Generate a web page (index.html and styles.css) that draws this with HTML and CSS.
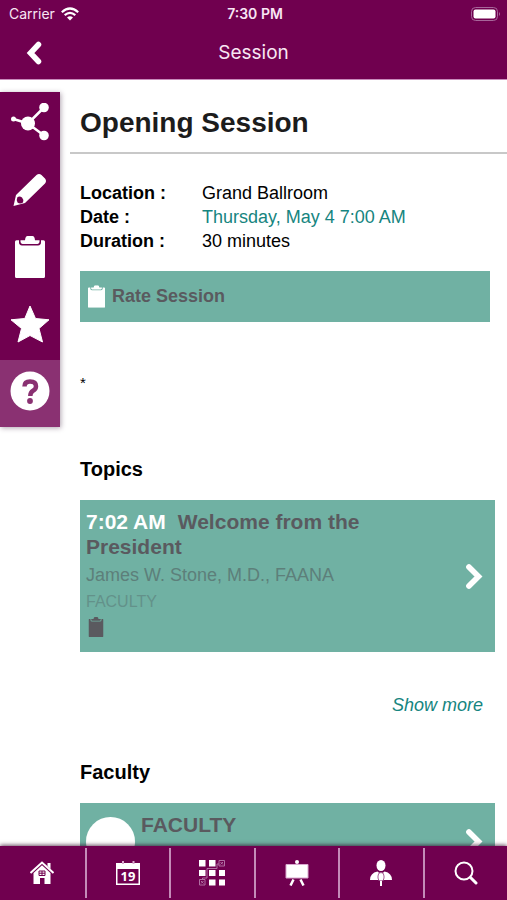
FILE: index.html
```html
<!DOCTYPE html>
<html lang="en">
<head>
<meta charset="utf-8">
<meta name="viewport" content="width=device-width, initial-scale=1">
<title>Session</title>
<link rel="stylesheet" href="styles.css">
</head>
<body>
<svg class="defs" aria-hidden="true">
  <symbol id="clipboard" viewBox="0 0 30 40">
    <path d="M1.500 4H4V6Q4 9 7 9H23Q26 9 26 6V4H28.500Q30 4 30 5.500V38.500Q30 40 28.500 40H1.500Q0 40 0 38.500V5.500Q0 4 1.500 4Z"/>
    <path d="M5.500 4H10Q10.500 0 12.500 0H17.500Q19.500 0 20 4H24.500V5.500Q24.500 7.500 22.500 7.500H7.500Q5.500 7.500 5.500 5.500Z"/>
  </symbol>
  <symbol id="chevron" viewBox="0 0 16 24">
    <path d="M3.500 3.500L12 12L3.500 20.500" fill="none" stroke="currentColor" stroke-width="5" stroke-linecap="round"/>
  </symbol>
</svg>
<div class="app">
  <header class="top">
    <div class="status">
      <div class="carrier">
        <span>Carrier</span>
        <svg width="18" height="14" viewBox="0 0 18 14">
          <path d="M0.800 5.200Q9 -2.200 17.200 5.200M3.700 8.200Q9 3.600 14.300 8.200" fill="none" stroke="currentColor" stroke-width="2.200"/>
          <path d="M6 10.500Q9 8 12 10.500L9 13.500Z"/>
        </svg>
      </div>
      <span class="clock">7:30 PM</span>
      <svg class="battery" width="30" height="14" viewBox="0 0 30 14">
        <rect x="0.500" y="0.500" width="26" height="13" rx="4" fill="none" stroke="#a7669a"/>
        <rect x="2.500" y="2.500" width="22" height="9" rx="2" fill="#fff"/>
        <path d="M28 5Q30 7 28 9Z" fill="#a7669a"/>
      </svg>
    </div>
    <div class="nav">
      <button class="back" type="button" aria-label="Back"><svg width="16" height="24" viewBox="0 0 16 24"><path d="M12.500 3.500L4.500 12L12.500 20.500" fill="none" stroke="currentColor" stroke-width="5.500" stroke-linecap="round"/></svg></button>
      <span class="nav-title">Session</span>
      <span></span>
    </div>
  </header>

  <div class="body">
    <aside class="tools">
      <button type="button" aria-label="Share"><svg width="40" height="40" viewBox="0 0 40 40"><path d="M3.500 16L18 20.500L34 4.500M18 20.500L34 32.500" fill="none" stroke="currentColor" stroke-width="2.500"/><circle cx="3.500" cy="16" r="2.500"/><circle cx="18" cy="20.500" r="7"/><circle cx="34" cy="4.500" r="4.800"/><circle cx="34" cy="32.500" r="4.800"/></svg></button>
      <button type="button" aria-label="Notes"><svg width="34" height="34" viewBox="0 0 34 34"><path fill-rule="evenodd" d="M0.500 33L3 22L23.500 2Q26 0 28.500 2L32 5.500Q34 8 32 10.500L12 30ZM4.500 24Q3 27 4.500 29.500Q7 31.500 10 29.500Q11 26.500 9 24.500Q7 23 4.500 24Z"/></svg></button>
      <button type="button" aria-label="Evaluation"><svg width="30" height="42" viewBox="0 0 30 40" preserveAspectRatio="none"><use href="#clipboard"/></svg></button>
      <button type="button" aria-label="Favorite"><svg width="40" height="38" viewBox="0 0 40 38"><path d="M20 1L25.500 13.500L39 14.800L29 23.500L32.500 37L20 30.500L8 37L11.500 23.500L1 14.800L14.800 13.500Z" stroke="currentColor" stroke-linejoin="round"/></svg></button>
      <button class="active" type="button" aria-label="Help"><svg width="40" height="40" viewBox="0 0 40 40"><circle cx="20" cy="20" r="19.500"/><path d="M14.500 15.500Q14.500 10.500 20 10.500Q26 10.500 26 15.200Q26 18 23 19.700Q20.300 21.300 20.300 25" fill="none" stroke="#8a3172" stroke-width="4.500"/><circle cx="20" cy="30" r="2.900" fill="#8a3172"/></svg></button>
    </aside>

    <main class="content">
      <h1>Opening Session</h1>
      <div class="inner">
        <dl class="facts">
          <dt>Location :</dt><dd>Grand Ballroom</dd>
          <dt>Date :</dt><dd class="teal">Thursday, May 4 7:00 AM</dd>
          <dt>Duration :</dt><dd>30 minutes</dd>
        </dl>
        <button class="rate" type="button"><svg width="17" height="23" viewBox="0 0 30 40"><use href="#clipboard"/></svg>Rate Session</button>
        <p class="note">*</p>
        <h2>Topics</h2>
        <a class="card" href="#topic">
          <div class="card-text">
            <h3><span class="time">7:02 AM</span>Welcome from the President</h3>
            <p class="person">James W. Stone, M.D., FAANA</p>
            <p class="role">FACULTY</p>
            <svg class="mark" width="20" height="20" viewBox="0 0 30 40"><use href="#clipboard"/></svg>
          </div>
          <svg class="go" width="18" height="27"><use href="#chevron"/></svg>
        </a>
        <a class="more" href="#more">Show more</a>
        <h2>Faculty</h2>
        <a class="card member" href="#faculty">
          <span class="avatar"></span>
          <div class="card-text"><h3>FACULTY</h3></div>
          <svg class="go" width="18" height="27"><use href="#chevron"/></svg>
        </a>
      </div>
    </main>
  </div>

  <nav class="tabs">
    <a href="#home" aria-label="Home"><svg width="24" height="24" viewBox="0 0 24 24"><path d="M0.500 12L12 1.500L23.500 12" fill="none" stroke="currentColor" stroke-width="2"/><path d="M17.500 2H20.500V8L17.500 5ZM3.500 12L12 4.200L20.500 12V23H14.500V17H10V23H3.500Z"/><path d="M9 10H15V14.500H9ZM12 10V14.500M9 12.200H15" fill="none" stroke="#70004f"/></svg></a>
    <a href="#agenda" aria-label="Agenda"><svg width="26" height="26" viewBox="0 0 26 26"><path fill-rule="evenodd" d="M1 3H25V25H1ZM2.500 9V23.500H23.500V9Z"/><path d="M8 1V4M18.500 1V4" stroke="#d9a9cf" stroke-width="2"/><text class="day" x="13" y="21" text-anchor="middle">19</text></svg></a>
    <a href="#floor" aria-label="Floor plan"><svg width="26" height="26" viewBox="0 0 26 26"><path d="M0 0H6.500V6.500H0ZM10 0H16.500V6.500H10ZM0 10H6.500V16H0ZM10 10H16.500V16H10ZM20 10H26V16H20ZM10 19.500H16.500V25.500H10ZM20 19.500H26V25.500H20Z"/><path d="M20 0.500H25.500V6H20ZM0.500 19.500H6V25H0.500ZM21.500 2L24 4.500M24 2L21.500 4.500M2 21L4.500 23.500M4.500 21L2 23.500M3.500 19V18H8V8.500H18V4H20" fill="none" stroke="#b06fa2" stroke-width="1"/></svg></a>
    <a href="#exhibits" aria-label="Exhibits"><svg width="24" height="26" viewBox="0 0 24 26"><circle cx="12" cy="2" r="2"/><path d="M1 4.500H23V18H1Z" stroke="#d9a9cf"/><path d="M8.500 19.500L5.500 25.500M15.500 19.500L18.500 25.500" stroke="currentColor" stroke-width="2.500"/></svg></a>
    <a href="#speakers" aria-label="Speakers"><svg width="24" height="26" viewBox="0 0 24 26"><ellipse cx="12" cy="5.500" rx="4.500" ry="5.500"/><path d="M1 20Q1 13 8.500 11.500L12 14.500L15.500 11.500Q23 13 23 20Z"/><path d="M9 16Q9 12.500 12 12.500Q15 12.500 15 16V18Q15 21 12 21Q9 21 9 18Z" stroke="#a55d94"/><path d="M12 21V26" stroke="#fff" stroke-width="2"/></svg></a>
    <a href="#search" aria-label="Search"><svg width="24" height="24" viewBox="0 0 24 24"><circle cx="10" cy="10" r="8.500" fill="none" stroke="currentColor" stroke-width="2"/><path d="M16.500 16.500L22 22" stroke="currentColor" stroke-width="3" stroke-linecap="round"/></svg></a>
  </nav>
</div>
</body>
</html>
```
FILE: styles.css
```css
* { box-sizing: border-box; }

body, h1, h2, h3, p, dl, dd { margin: 0; }

body {
  background: #fff;
  color: #000;
  font-family: "Liberation Sans", Arial, sans-serif;
  font-size: 18px;
}

.defs { position: absolute; width: 0; height: 0; }

svg { display: block; fill: currentColor; flex: none; }

button {
  border: 0;
  padding: 0;
  background: none;
  color: inherit;
  font: inherit;
  cursor: pointer;
}

a { color: inherit; text-decoration: none; }

.app {
  display: grid;
  grid-template-rows: auto minmax(0, 1fr) auto;
  height: 100vh;
}

.top {
  background: #70004f;
  border-bottom: 1px solid #c88bbb;
  color: #f8e6f4;
  font-family: Inter, sans-serif;
}

.status, .nav {
  display: grid;
  grid-template-columns: 1fr auto 1fr;
  align-items: center;
}

.status {
  height: 27px;
  padding: 0 6px 0 9px;
  font-size: 14px;
}

.carrier { display: flex; align-items: center; gap: 6px; }
.carrier svg { color: #fff; }
.clock { font-weight: 600; }
.battery { justify-self: end; }

.nav { height: 52px; padding-bottom: 1px; }
.back { justify-self: start; padding: 8px 26px; color: #fff; }
.nav-title { font-size: 19px; }

.body {
  display: grid;
  grid-template-columns: 60px minmax(0, 1fr);
  align-items: start;
  gap: 10px;
  overflow: hidden;
}

.tools {
  display: grid;
  grid-auto-rows: 67px;
  margin-top: 12px;
  background: #70004f;
  color: #fff;
  box-shadow: 1px 1px 5px rgba(60, 30, 60, 0.4);
}

.tools button { display: grid; place-items: center; padding-bottom: 6px; }
.tools .active { background: #8a3172; }

h1 {
  padding: 26px 10px 12px;
  border-bottom: 2px solid #c8c8c8;
  color: #1c1c1c;
  font-size: 28px;
  line-height: 34px;
}

.inner { padding: 27px 12px 0 10px; }

.facts {
  display: grid;
  grid-template-columns: 122px 1fr;
  line-height: 24px;
}

dt { font-weight: bold; }
.teal, .more { color: #168580; }

.rate {
  display: flex;
  align-items: center;
  gap: 7px;
  width: calc(100% - 5px);
  height: 51px;
  margin-top: 18px;
  padding-left: 8px;
  background: #70b1a3;
  color: #5a5a5f;
  font-weight: bold;
}

.rate svg { color: #fff; }

.note { margin-top: 49px; font-size: 15px; line-height: 24px; }

h2 { margin: 61px 0 18px; font-size: 20px; line-height: 26px; }

.card {
  display: flex;
  align-items: center;
  min-height: 152px;
  padding: 9px 12px 9px 6px;
  background: #70b1a3;
  color: #5a5a5f;
}

.card-text { flex: 1; align-self: flex-start; }
.card .go { color: #fff; }

h3 { max-width: 300px; font-size: 21px; line-height: 25px; }
.time { margin-right: 12px; color: #fff; }
.person { line-height: 32px; color: #5d7f7a; }
.role { font-size: 16px; line-height: 22px; color: #63918a; }
.mark { margin-top: 4px; }

.more {
  display: block;
  margin-top: 40px;
  padding-right: 12px;
  font-style: italic;
  line-height: 26px;
  text-align: right;
}

.more + h2 { margin-top: 41px; }

.member { align-items: flex-start; gap: 6px; }
.member .go { margin-top: 16px; }
.avatar { width: 49px; height: 49px; margin-top: 5px; border-radius: 50%; background: #fff; }

.tabs {
  position: relative;
  display: grid;
  grid-template-columns: repeat(6, 1fr);
  padding: 2px 0;
  background: #70004f;
  color: #fff;
  box-shadow: 0 -1px 4px rgba(40, 0, 30, 0.7);
}

.tabs a { display: grid; place-items: center; height: 50px; }
.tabs a + a { border-left: 2px solid #c48bb8; }
.day { font: bold 13px "Open Sans", sans-serif; }
```
